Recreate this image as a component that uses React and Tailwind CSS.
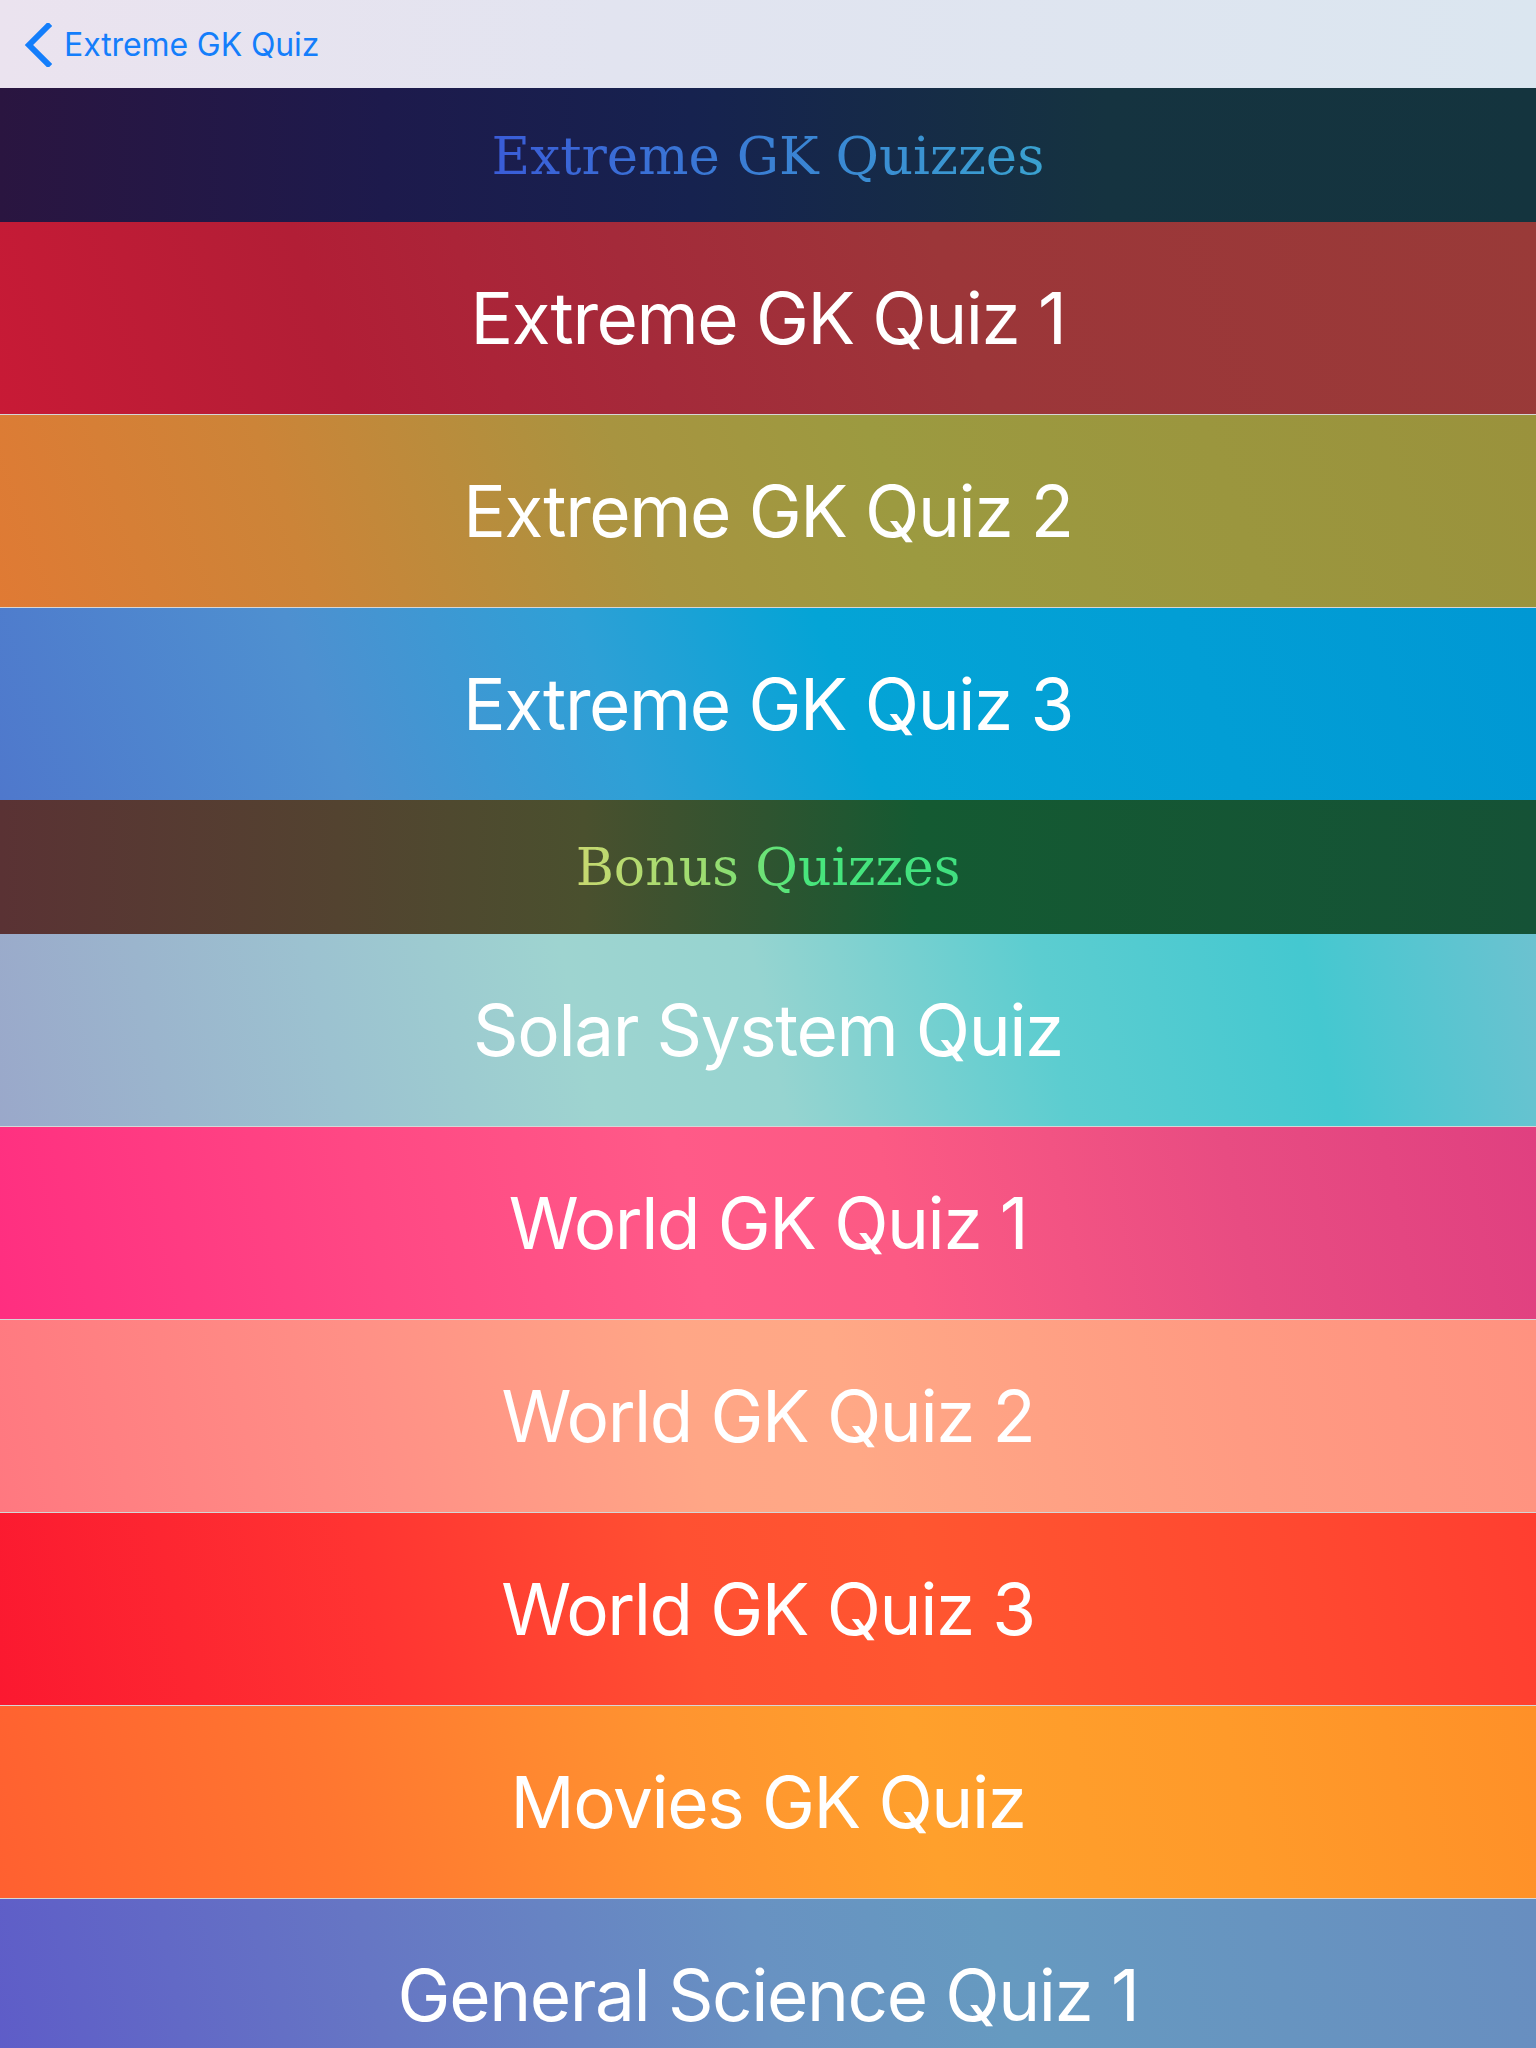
import React from "react";

const Row = ({ label, bg, top }) => (
  <div
    className={`shrink-0 flex items-center justify-center ${bg} ${
      top ? "h-[193px] border-t border-[#d6d6d6]" : "h-[192px]"
    }`}
  >
    <span className="text-white text-[71px] leading-none font-normal tracking-[-1.4px] [font-family:Inter,'Noto_Sans',sans-serif]">
      {label}
    </span>
  </div>
);

const Header = ({ label, bg, textBg, size }) => (
  <div className={`h-[134px] shrink-0 flex items-center justify-center ${bg}`}>
    <span
      className={`${size} leading-none bg-clip-text text-transparent [font-family:'DejaVu_Serif',serif] ${textBg}`}
    >
      {label}
    </span>
  </div>
);

export default function App() {
  return (
    <div className="w-[1536px] h-[2048px] overflow-hidden flex flex-col">
      <div className="h-[88px] shrink-0 flex items-center bg-[linear-gradient(90deg,#ebe3ef_0%,#e2e4f0_40%,#dbe6f0_100%)]">
        <div className="flex items-center pl-[24px] gap-[12px] pt-[2px]">
          <svg width="28" height="44" viewBox="0 0 28 44" className="shrink-0">
            <polyline
              points="24,3 5,22 24,41"
              fill="none"
              stroke="#147efb"
              strokeWidth="6"
              strokeLinecap="square"
              strokeLinejoin="miter"
            />
          </svg>
          <span className="text-[32px] tracking-[-0.1px] text-[#147efb] leading-none [font-family:Inter,'Noto_Sans',sans-serif]">
            Extreme GK Quiz
          </span>
        </div>
      </div>

      <Header
        label="Extreme GK Quizzes"
        size="text-[53px]"
        bg="bg-[linear-gradient(90deg,#2a1540_0%,#1d1a4c_25%,#16224f_45%,#153340_72%,#14343e_100%)]"
        textBg="bg-[linear-gradient(90deg,#3a5cd8_0%,#3a80d4_50%,#3aa2d0_100%)]"
      />
      <Row
        label="Extreme GK Quiz 1"
        bg="bg-[linear-gradient(72deg,#c81a36_0%,#b21e36_22%,#a42a3a_42%,#9c3639_62%,#993a38_100%)]"
      />
      <Row
        top
        label="Extreme GK Quiz 2"
        bg="bg-[linear-gradient(70deg,#e07a34_0%,#cc8438_20%,#a89440_42%,#9c9a40_58%,#9a923c_100%)]"
      />
      <Row
        top
        label="Extreme GK Quiz 3"
        bg="bg-[linear-gradient(70deg,#4f78cc_0%,#4e90d0_22%,#2ea0d6_40%,#04a4d6_55%,#0098d4_100%)]"
      />
      <Header
        label="Bonus Quizzes"
        size="text-[52px]"
        bg="bg-[linear-gradient(90deg,#5a3234_0%,#534330_22%,#4a502e_38%,#2e5430_50%,#145a32_60%,#155236_100%)]"
        textBg="bg-[linear-gradient(90deg,#c8d870_0%,#9adc70_35%,#48e67c_60%,#40e080_100%)]"
      />
      <Row
        label="Solar System Quiz"
        bg="bg-[linear-gradient(78deg,#9aa8ca_0%,#9cc2d0_22%,#9ed4d0_38%,#96d4d0_50%,#5ccdd0_68%,#44c8d0_85%,#6cc2d0_100%)]"
      />
      <Row
        top
        label="World GK Quiz 1"
        bg="bg-[linear-gradient(78deg,#ff2e80_0%,#ff4884_25%,#ff5a88_45%,#fc5a84_58%,#e84c82_80%,#e04080_100%)]"
      />
      <Row
        top
        label="World GK Quiz 2"
        bg="bg-[linear-gradient(78deg,#ff7880_0%,#ff9086_25%,#ffa686_45%,#ffa886_55%,#ff9a82_80%,#ff9280_100%)]"
      />
      <Row
        top
        label="World GK Quiz 3"
        bg="bg-[linear-gradient(78deg,#fb1830_0%,#ff3432_25%,#ff5032_45%,#ff5630_60%,#ff4830_85%,#ff3e30_100%)]"
      />
      <Row
        top
        label="Movies GK Quiz"
        bg="bg-[linear-gradient(78deg,#ff6030_0%,#ff7630_22%,#ff9430_45%,#ffa02c_60%,#ff9a2a_80%,#ff9028_100%)]"
      />
      <Row
        top
        label="General Science Quiz 1"
        bg="bg-[linear-gradient(78deg,#5e5cc8_0%,#6676c4_25%,#6892c2_50%,#669ac0_65%,#688ec0_100%)]"
      />
    </div>
  );
}
